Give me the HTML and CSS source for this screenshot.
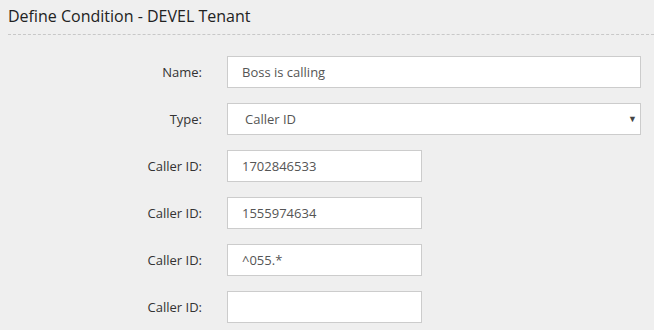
FILE: index.html
```html
<!DOCTYPE html>
<html lang="en">
<head>
    <meta charset="UTF-8">
    <meta name="viewport" content="width=device-width, initial-scale=1.0">
    <title>Define Condition</title>
    <link rel="stylesheet" href="styles.css">
</head>
<body>
    <div class="panel">
        <h2 class="panel-title">Define Condition - DEVEL Tenant</h2>
        <form class="condition-form">
            <label for="name">Name:</label>
            <input type="text" id="name" class="wide" value="Boss is calling">

            <label for="type">Type:</label>
            <div class="select-wrap wide">
                <select id="type">
                    <option>Caller ID</option>
                </select>
                <span class="caret">&#9660;</span>
            </div>

            <label for="cid1">Caller ID:</label>
            <input type="text" id="cid1" class="narrow" value="1702846533">

            <label for="cid2">Caller ID:</label>
            <input type="text" id="cid2" class="narrow" value="1555974634">

            <label for="cid3">Caller ID:</label>
            <input type="text" id="cid3" class="narrow" value="^055.*">

            <label for="cid4">Caller ID:</label>
            <input type="text" id="cid4" class="narrow" value="">
        </form>
    </div>
</body>
</html>
```

FILE: styles.css
```css
body {
    font-family: "Open Sans", Arial, sans-serif;
    background-color: #efefef;
    margin: 0;
    padding: 0;
    color: #333;
}
.panel {
    padding-left: 8px;
}
.panel-title {
    margin: 0;
    padding-top: 5px;
    height: 29px;
    font-size: 16px;
    font-weight: normal;
    color: #222;
    border-bottom: 1px dashed #c8c8c8;
}
.condition-form {
    display: grid;
    grid-template-columns: 194px auto;
    column-gap: 25px;
    row-gap: 15px;
    align-items: center;
    justify-items: start;
    padding-top: 21px;
}
.condition-form label {
    justify-self: end;
    font-size: 13px;
    color: #333;
}
.condition-form input, .condition-form select {
    box-sizing: border-box;
    height: 32px;
    border: 1px solid #ccc;
    background: #fff;
    font-family: "Open Sans", Arial, sans-serif;
    font-size: 13px;
    color: #555;
    margin: 0;
    border-radius: 0;
}
.condition-form input {
    padding: 0 14px;
}
.wide {
    width: 414px;
}
.narrow {
    width: 195px;
}
.select-wrap {
    position: relative;
    height: 32px;
}
.select-wrap select {
    width: 100%;
    padding: 0 17px;
    appearance: none;
    -webkit-appearance: none;
    outline: none;
}
.caret {
    position: absolute;
    right: 4px;
    top: 9px;
    font-size: 9px;
    color: #444;
    pointer-events: none;
}
```
